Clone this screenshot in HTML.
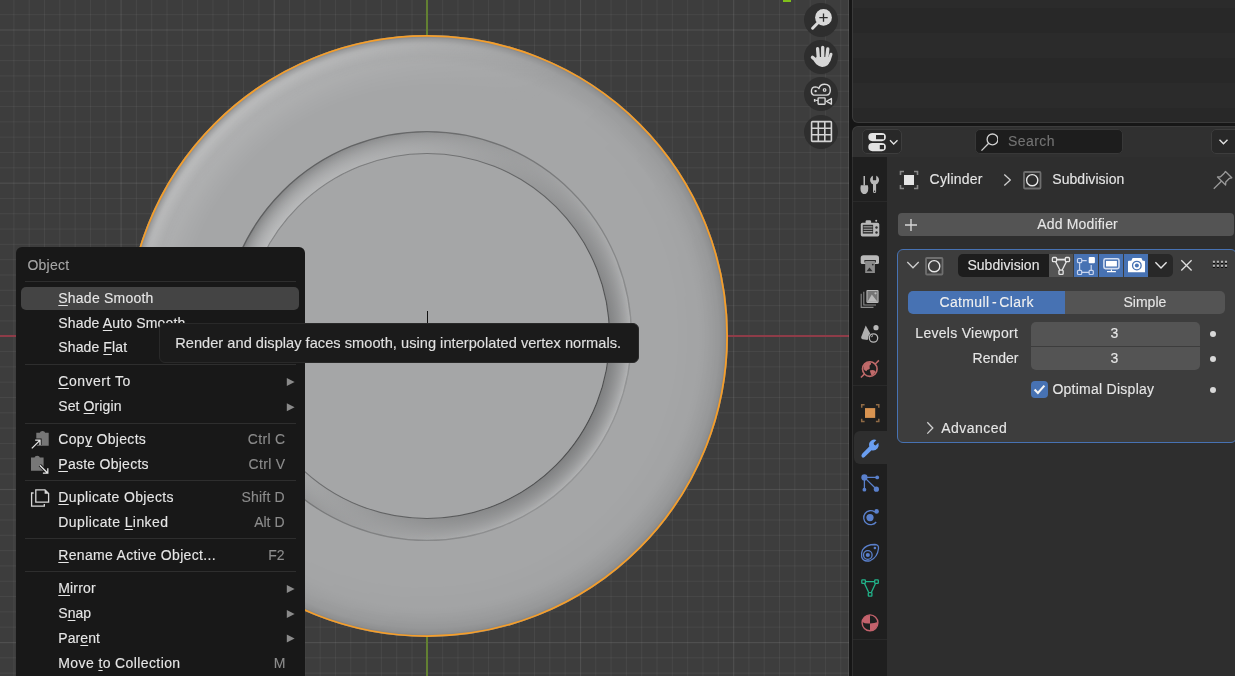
<!DOCTYPE html>
<html><head><meta charset="utf-8">
<style>
*{box-sizing:border-box;margin:0;padding:0}
html,body{width:1235px;height:676px;overflow:hidden;background:#161616;font-family:"Liberation Sans",sans-serif;}
.abs{position:absolute}
#vp{position:absolute;left:0;top:0;width:849px;height:676px;background-color:#3d3d3d;overflow:hidden;
 background-image:
  linear-gradient(to right, rgba(255,255,255,0.055) 1px, transparent 1px),
  linear-gradient(to bottom, rgba(255,255,255,0.055) 1px, transparent 1px),
  linear-gradient(to right, rgba(255,255,255,0.05) 1px, transparent 1px),
  linear-gradient(to bottom, rgba(255,255,255,0.05) 1px, transparent 1px);
 background-size:153.2px 153.2px,153.2px 153.2px,15.32px 15.32px,15.32px 15.32px;
 background-position:120.6px 0,0 29.5px,120.6px 0,0 29.5px;
}
#plate{position:absolute;left:126.5px;top:35px;width:601px;height:601px;border-radius:50%;
 background:#a4a5a6;box-shadow:0 0 0 1.5px #f0922a;overflow:hidden}
.gz{position:absolute;left:804px;width:34px;height:34px;border-radius:50%;background:#2e2e2e}
#outl{position:absolute;left:852px;top:0;width:383px;height:123px;background:#2b2b2b;border-bottom-left-radius:6px;overflow:hidden}
#props{position:absolute;left:852px;top:126px;width:383px;height:550px;background:#2e2e2e;border-top-left-radius:6px;overflow:hidden}
.t{position:absolute;white-space:nowrap;font-size:14px;line-height:14px;color:#e6e6e6}
#menu{position:absolute;left:16px;top:247px;width:289px;height:440px;background:#181818;border-radius:6px}
.mi{position:absolute;left:42.3px;font-size:14px;color:#e6e6e6;line-height:14px;white-space:nowrap}
u{text-decoration:underline;text-decoration-thickness:1px;text-underline-offset:1.5px}
.sc{position:absolute;right:20.5px;font-size:14px;color:#8c8c8c;line-height:14px;white-space:nowrap}
.sep{position:absolute;left:9px;width:271px;height:1px;background:#2e2e2e}
#tip{position:absolute;left:159.2px;top:323px;width:479.6px;height:39.5px;background:#1b1b1b;border:1px solid #292929;border-radius:6px}
#root{-webkit-text-stroke:0.12px currentColor;position:absolute;left:0;top:0;width:1235px;height:676px;overflow:hidden;will-change:transform;background:#161616}
</style></head><body><div id="root">
<div id="vp">
  <div class="abs" style="left:0;top:335px;width:849px;height:2px;background:#8e3c48"></div>
  <div class="abs" style="left:426px;top:0;width:2px;height:676px;background:#628032"></div>
  <svg class="abs" style="left:126px;top:34.5px" width="602" height="602" viewBox="0 0 602 602">
<defs>
 <radialGradient id="edgeD" cx="301" cy="301" r="301" gradientUnits="userSpaceOnUse">
  <stop offset="0.90" stop-color="#000" stop-opacity="0"/>
  <stop offset="0.97" stop-color="#000" stop-opacity="0.05"/>
  <stop offset="0.988" stop-color="#000" stop-opacity="0.12"/>
  <stop offset="1" stop-color="#000" stop-opacity="0.26"/>
 </radialGradient>
 <radialGradient id="hbm" cx="301" cy="301" r="301" gradientUnits="userSpaceOnUse">
  <stop offset="0.82" stop-color="#000"/>
  <stop offset="0.93" stop-color="#777"/>
  <stop offset="0.962" stop-color="#fff"/>
  <stop offset="0.975" stop-color="#fff"/>
  <stop offset="1" stop-color="#222"/>
 </radialGradient>
 <mask id="mH" maskUnits="userSpaceOnUse" x="0" y="0" width="602" height="602"><circle cx="301" cy="301" r="301" fill="url(#hbm)"/></mask>
 <linearGradient id="hl" x1="60" y1="90" x2="420" y2="420" gradientUnits="userSpaceOnUse">
  <stop offset="0" stop-color="#fff" stop-opacity="0.36"/>
  <stop offset="0.5" stop-color="#fff" stop-opacity="0.0"/>
  <stop offset="0.5" stop-color="#000" stop-opacity="0.0"/>
  <stop offset="1" stop-color="#000" stop-opacity="0.03"/>
 </linearGradient>
 <radialGradient id="rmo" cx="301" cy="301" r="205" gradientUnits="userSpaceOnUse">
  <stop offset="0" stop-color="#000"/>
  <stop offset="0.888" stop-color="#000"/>
  <stop offset="1" stop-color="#fff"/>
 </radialGradient>
 <radialGradient id="rmi" cx="301" cy="301" r="205" gradientUnits="userSpaceOnUse">
  <stop offset="0" stop-color="#000"/>
  <stop offset="0.888" stop-color="#000"/>
  <stop offset="0.889" stop-color="#fff"/>
  <stop offset="1" stop-color="#000"/>
 </radialGradient>
 <mask id="mRo" maskUnits="userSpaceOnUse" x="0" y="0" width="602" height="602"><circle cx="301" cy="301" r="205" fill="url(#rmo)"/></mask>
 <mask id="mRi" maskUnits="userSpaceOnUse" x="0" y="0" width="602" height="602"><circle cx="301" cy="301" r="205" fill="url(#rmi)"/></mask>
 <linearGradient id="vA" x1="115" y1="214" x2="487" y2="388" gradientUnits="userSpaceOnUse">
  <stop offset="0" stop-color="#808182"/>
  <stop offset="1" stop-color="#b8b9ba"/>
 </linearGradient>
 <linearGradient id="vB" x1="115" y1="214" x2="487" y2="388" gradientUnits="userSpaceOnUse">
  <stop offset="0" stop-color="#bebfc0"/>
  <stop offset="1" stop-color="#7a7b7c"/>
 </linearGradient>
 <linearGradient id="liI" x1="115" y1="214" x2="487" y2="388" gradientUnits="userSpaceOnUse">
  <stop offset="0" stop-color="#7a7b7c"/>
  <stop offset="0.5" stop-color="#5a5b5c"/>
  <stop offset="1" stop-color="#404142"/>
 </linearGradient>
 <linearGradient id="liO" x1="115" y1="150" x2="487" y2="452" gradientUnits="userSpaceOnUse">
  <stop offset="0" stop-color="#4a4b4c" stop-opacity="0.7"/>
  <stop offset="0.5" stop-color="#5a5b5c" stop-opacity="0.55"/>
  <stop offset="1" stop-color="#6a6b6c" stop-opacity="0.4"/>
 </linearGradient>
</defs>
<circle cx="301" cy="301" r="301" fill="#a5a6a7"/>
<circle cx="301" cy="301" r="301" fill="url(#hl)" mask="url(#mH)"/>
<circle cx="301" cy="301" r="301" fill="url(#edgeD)"/>
<circle cx="301" cy="301" r="205" fill="url(#vA)" mask="url(#mRo)"/>
<circle cx="301" cy="301" r="205" fill="url(#vB)" mask="url(#mRi)"/>
<circle cx="301" cy="301" r="204.4" fill="none" stroke="url(#liO)" stroke-width="1.3"/>
<circle cx="301" cy="301" r="182.5" fill="none" stroke="url(#liI)" stroke-opacity="0.8" stroke-width="1.1"/>
<circle cx="301" cy="301" r="300.1" fill="none" stroke="#f59e2a" stroke-width="1.8"/>
</svg>
  <div class="abs" style="left:427px;top:311px;width:1px;height:12px;background:#111"></div>
  <div class="abs" style="left:783px;top:0;width:8px;height:1.5px;background:#7fbf1a"></div>
  <div class="abs" style="left:848px;top:0;width:1px;height:676px;background:rgba(255,255,255,0.09)"></div>
  <div class="gz" style="top:3px"></div>
  <div class="gz" style="top:40px"></div>
  <div class="gz" style="top:77px"></div>
  <div class="gz" style="top:115px"></div>
  <svg class="abs" style="left:800px;top:0" width="40" height="150" viewBox="800 0 40 150">
    <circle cx="823.5" cy="17.4" r="8.4" fill="#d8d8d8"/>
    <path d="M819.3 17.6 H827.7 M823.5 13.4 V21.8" stroke="#2a2a2a" stroke-width="1.3"/>
    <path d="M812.6 28.2 L818 22.8" stroke="#d8d8d8" stroke-width="3" stroke-linecap="round"/>
    <g stroke="#d6d6d6" stroke-linecap="round" fill="none">
      <path d="M817.6 48.7 L818.4 59" stroke-width="3.3"/>
      <path d="M822.7 47.4 L822.7 58.6" stroke-width="3.3"/>
      <path d="M827.8 49 L826.7 59" stroke-width="3.3"/>
      <path d="M831 54.3 L829 60.5" stroke-width="3.0"/>
      <path d="M812.5 57.4 L816.8 60.8" stroke-width="3.4"/>
    </g>
    <path d="M816.2 57 H830.4 Q830.4 63 827.5 65.2 Q825 67 822 66.9 Q818.8 66.7 816.3 64.3 Q814.6 62.6 813.6 60.2 L816.2 59 Z" fill="#d6d6d6"/>
    <g fill="none" stroke="#d8d8d8" stroke-width="1.4" stroke-linejoin="round">
      <path d="M813.5 95 Q811.4 94.5 811.4 91.3 Q811.4 87 815.5 86.9 Q817.6 86.9 818.9 88.6 Q819.8 84.2 824.6 84.2 Q830.3 84.3 830.3 90 Q830.3 95 826.5 95.1 Z"/>
      <rect x="818.1" y="97.9" width="7" height="6.3" rx="0.6"/>
      <path d="M831.4 98.5 L826.6 101.3 L831.4 104.1 Z"/>
    </g>
    <rect x="813.9" y="99" width="1.6" height="2.8" fill="#d8d8d8"/>
    <path d="M815.5 100.4 H818" stroke="#d8d8d8" stroke-width="1.2"/>
    <circle cx="815.6" cy="91.1" r="1.2" fill="#d8d8d8"/>
    <circle cx="824.6" cy="90" r="1.9" fill="#d8d8d8"/>
    <path d="M824.6 88.8 V91.2" stroke="#2e2e2e" stroke-width="0.7"/>
    <g fill="none" stroke="#d4d4d4" stroke-width="1.6">
      <rect x="811.6" y="121.6" width="19.8" height="19.8" rx="1"/>
      <path d="M818.3 121.6 V141.4 M824.8 121.6 V141.4 M811.6 128.2 H831.4 M811.6 134.8 H831.4"/>
    </g>
  </svg>
</div>
<div id="outl">
  <div class="abs" style="left:0;top:8px;width:383px;height:25px;background:#282828"></div>
  <div class="abs" style="left:0;top:58px;width:383px;height:25px;background:#282828"></div>
  <div class="abs" style="left:0;top:108px;width:383px;height:15px;background:#282828"></div>
  <div class="abs" style="left:0;top:0;width:400px;height:123px;border-left:1px solid #3a3a3a;border-bottom:1px solid #3a3a3a;border-bottom-left-radius:6px"></div>
</div>
<div id="props">
  <!-- header -->
  <div class="abs" style="left:0;top:0;width:383px;height:31px;background:#303030;border-top:1px solid #3c3c3c;border-left:1px solid #3c3c3c;border-top-left-radius:6px"></div>
  <div class="abs" style="left:10px;top:3px;width:40px;height:25px;background:#282828;border:1px solid #3d3d3d;border-radius:5px"></div>
  <svg class="abs" style="left:14px;top:5px" width="36" height="22" viewBox="0 0 36 22">
    <rect x="2.3" y="2" width="17.6" height="8.2" rx="4.1" fill="#e2e2e2"/>
    <rect x="10" y="4" width="8" height="4.2" fill="#2a2a2a"/>
    <rect x="2.3" y="12" width="17.6" height="8.2" rx="4.1" fill="#e2e2e2"/>
    <rect x="13.8" y="14" width="4.2" height="4.2" fill="#2a2a2a"/>
    <path d="M24 9.2 L27.7 13 L31.5 9.2" fill="none" stroke="#e2e2e2" stroke-width="1.3"/>
  </svg>
  <div class="abs" style="left:123px;top:3px;width:148px;height:25px;background:#1d1d1d;border:1px solid #383838;border-radius:5px"></div>
  <svg class="abs" style="left:126px;top:5px" width="20" height="22" viewBox="0 0 20 22">
    <circle cx="14.5" cy="8.4" r="5.4" fill="none" stroke="#d0d0d0" stroke-width="1.3"/>
    <path d="M10.7 12.3 L3.5 19.6" stroke="#d0d0d0" stroke-width="1.3"/>
  </svg>
  <div class="t" style="left:156px;top:8.4px;color:#737373;letter-spacing:0.45px">Search</div>
  <div class="abs" style="left:359px;top:3px;width:40px;height:25px;background:#282828;border:1px solid #3d3d3d;border-radius:5px"></div>
  <svg class="abs" style="left:366px;top:12px" width="12" height="8" viewBox="0 0 12 8">
    <path d="M1.5 1.8 L5.5 5.8 L9.5 1.8" fill="none" stroke="#e2e2e2" stroke-width="1.4"/>
  </svg>
  <!-- tabs column -->
  <div class="abs" style="left:0;top:31px;width:35px;height:519px;background:#1f1f1f;border-left:1px solid #303030"></div>
  <div class="abs" style="left:1px;top:75px;width:34px;height:1px;background:#292929"></div>
  <div class="abs" style="left:1px;top:259px;width:34px;height:1px;background:#292929"></div>
  <div class="abs" style="left:1px;top:513px;width:34px;height:1px;background:#292929"></div>
  <div class="abs" style="left:2px;top:305px;width:34px;height:33px;background:#2e2e2e;border-radius:6px 0 0 6px"></div>
  <!-- content -->
  <svg class="abs" style="left:0;top:0" width="36" height="550" viewBox="0 0 36 550">
  <!-- tool -->
  <g fill="#b8b8b8">
    <rect x="11.5" y="50" width="1.5" height="9.5"/>
    <path d="M8.8 59.2 H15.9 Q16.7 62.5 16 65 Q14.9 68.1 12.35 68.1 Q9.8 68.1 8.7 65 Q8 62.5 8.8 59.2 Z"/>
    <circle cx="22.55" cy="54" r="4.5"/>
    <rect x="21" y="55" width="3.1" height="12" rx="1.5"/>
  </g>
  <rect x="20.9" y="49" width="3.3" height="5.3" rx="0.6" fill="#1f1f1f"/>
  <circle cx="22.55" cy="65.3" r="0.75" fill="#1f1f1f"/>
  <!-- render -->
  <g fill="#b8b8b8">
    <rect x="8.8" y="96.8" width="18.5" height="13.6" rx="1.6"/>
    <path d="M13.6 97 V95.6 Q13.6 94.3 14.9 94.3 H17.8 Q19.1 94.3 19.1 95.6 V97 Z"/>
    <circle cx="24.2" cy="94.8" r="1"/>
  </g>
  <rect x="10.8" y="98.8" width="10.3" height="8.8" fill="#2e2e2e"/>
  <g fill="#b8b8b8"><rect x="11.5" y="100.4" width="9" height="0.9"/><rect x="11.5" y="102.8" width="9" height="0.9"/><rect x="11.5" y="105.2" width="9" height="0.9"/></g>
  <circle cx="24.5" cy="101.5" r="1.2" fill="#2e2e2e"/><circle cx="24.5" cy="106.5" r="1.2" fill="#2e2e2e"/>
  <!-- output -->
  <path d="M8.7 136.5 V132 Q8.7 129.2 11.5 129.2 H24.2 Q27 129.2 27 132 V136.5 Q27 138 25.5 138 H10.2 Q8.7 138 8.7 136.5 Z" fill="#b8b8b8"/>
  <rect x="12.4" y="134" width="11.5" height="2.5" fill="#2e2e2e"/>
  <rect x="13.2" y="135" width="9.7" height="12" fill="#8c8c8c"/>
  <path d="M14.6 145.3 L17.5 141.5 L20.5 145.3 Z" fill="#2e2e2e"/>
  <circle cx="20.8" cy="138.6" r="0.9" fill="#2e2e2e"/>
  <!-- view layer -->
  <g fill="none" stroke="#8a8a8a" stroke-width="1.1"><path d="M9.2 167.8 V181.4 H21.5"/><path d="M11.8 165.8 V179 H24"/></g>
  <rect x="14.4" y="163.9" width="12.2" height="13" rx="1.2" fill="#b8b8b8"/>
  <rect x="15.6" y="165.1" width="9.8" height="10.6" fill="#8c8c8c" fill-opacity="0"/>
  <path d="M15.6 175.5 L19.2 169.6 L23.6 175.5 Z" fill="#2e2e2e" fill-opacity="0.0"/>
  <rect x="15.5" y="165" width="10" height="10.8" fill="#767676"/>
  <path d="M15.5 175.8 L19.8 168.5 L25.5 175.8 Z" fill="#b8b8b8"/>
  <circle cx="23.5" cy="167.3" r="1.1" fill="#b8b8b8"/>
  <!-- scene -->
  <path d="M13.7 199.4 L9.2 211 Q8.7 212.6 10.4 213.2 L15.5 214 L18.5 208 Z" fill="#b0b0b0"/>
  <circle cx="24" cy="201.7" r="2.6" fill="#b8b8b8"/>
  <circle cx="21.5" cy="212" r="5.3" fill="#1f1f1f"/>
  <circle cx="21.5" cy="212" r="4.2" fill="none" stroke="#b8b8b8" stroke-width="1.3"/>
  <path d="M19.4 211.2 Q19.8 209.8 21 209.6" fill="none" stroke="#b8b8b8" stroke-width="1"/>
  <!-- world -->
  <circle cx="17.8" cy="243.1" r="7.3" fill="none" stroke="#c06a6a" stroke-width="1.6"/>
  <path d="M11.6 240.5 Q13 236.6 17.2 236 Q19.8 236.6 18.8 238.6 Q17 239.5 17.6 241.2 Q18.6 242.6 16.6 243.4 Q14.8 243.2 14.6 245.2 Q12.6 245 11.6 243 Z M17.8 244.6 Q20.6 243.2 23.4 245 Q23 248.2 19.6 249.8 Q18.6 247.6 17.8 244.6 Z" fill="#c06a6a"/>
  <path d="M8.9 251.5 L12.6 247.9 M23 238.2 L26.9 234.4" stroke="#c06a6a" stroke-width="1.5"/>
  <!-- object -->
  <path d="M9.7 281.8 V278.8 H12.6 M23.9 278.8 H26.8 V281.8 M26.8 292.7 V295.6 H23.9 M12.6 295.6 H9.7 V292.7" fill="none" stroke="#8f6a45" stroke-width="1.5"/>
  <rect x="13" y="282.1" width="10.2" height="9.8" fill="#d99451"/>
  <!-- modifier wrench active -->
  <path d="M10.4 327.4 L17.3 320.6 Q16.2 316.4 19.4 314.4 Q22 313 24.4 314.1 L21.6 317 Q21.6 319.2 23.6 319.6 L26.4 316.8 Q27.3 319.8 25.6 322.2 Q23.2 325 19.6 324.2 L12.6 331 Q11 332.4 9.8 331.1 Q8.7 329.3 10.4 327.4 Z" fill="#6a9ef0"/>
  <!-- particles -->
  <g stroke="#5a80cc" stroke-width="1.3"><path d="M12.4 351.4 H25.2 M12.4 351.4 V363.7 M12.4 351.4 L24.4 363.2"/></g>
  <g fill="#5a80cc"><circle cx="12.4" cy="351.4" r="3.1"/><circle cx="25.2" cy="351.4" r="1.9"/><circle cx="12.4" cy="363.7" r="1.9"/><circle cx="24.4" cy="363.2" r="2.6"/></g>
  <!-- physics -->
  <path d="M22.8 386 A7 7 0 1 0 24.2 396" fill="none" stroke="#5a80cc" stroke-width="1.3"/>
  <circle cx="18" cy="391.6" r="3.6" fill="#5a80cc"/>
  <circle cx="24.6" cy="385.4" r="2.3" fill="#5a80cc"/>
  <!-- constraints -->
  <path d="M10.5 424 Q14 418.5 23 418.5 Q27 418.8 26.5 422.5 Q25.5 431.2 18.5 434.5 Q11.5 436.5 9.7 431 Q9 427 10.5 424 Z" fill="none" stroke="#5a80cc" stroke-width="1.3"/>
  <circle cx="15.8" cy="429" r="4.3" fill="none" stroke="#5a80cc" stroke-width="1.3"/>
  <circle cx="15.8" cy="429" r="2.1" fill="#5a80cc"/>
  <circle cx="22.9" cy="422" r="1.3" fill="#5a80cc"/>
  <!-- data -->
  <g fill="none" stroke="#22b38a" stroke-width="1.3">
    <path d="M13.5 455.6 H22.5 M12.5 457.5 L16.5 466 M23.5 457.5 L19.5 466"/>
    <rect x="9.8" y="453.8" width="3.6" height="3.6" rx="0.6"/>
    <rect x="22.7" y="453.8" width="3.6" height="3.6" rx="0.6"/>
    <rect x="16.3" y="466.6" width="3.6" height="3.6" rx="0.6"/>
  </g>
  <!-- material -->
  <circle cx="18" cy="496.8" r="7.9" fill="none" stroke="#c4626c" stroke-width="1.4"/>
  <path d="M18 489 V497.5 Q13 498 10.3 496 A7.9 7.9 0 0 1 18 489 Z" fill="#c4626c"/>
  <path d="M18 504.6 V497.5 Q22.5 497.3 25.8 496 A7.9 7.9 0 0 1 18 504.6 Z" fill="#c4626c"/>
</svg>
  <!-- breadcrumb -->
  <svg class="abs" style="left:47px;top:44px" width="20" height="20" viewBox="0 0 20 20">
    <path d="M1.5 5 V1.5 H5 M15 1.5 H18.5 V5 M18.5 15 V18.5 H15 M5 18.5 H1.5 V15" fill="none" stroke="#8a8a8a" stroke-width="1.6"/>
    <rect x="5" y="5" width="10" height="10" fill="#e6e6e6"/>
  </svg>
  <div class="t" style="left:77.6px;top:46.3px;letter-spacing:0.2px">Cylinder</div>
  <svg class="abs" style="left:150px;top:47px" width="12" height="14" viewBox="0 0 12 14">
    <path d="M2.3 1.5 L8.3 7 L2.3 12.5" fill="none" stroke="#cfcfcf" stroke-width="1.3"/>
  </svg>
  <svg class="abs" style="left:170px;top:44px" width="20" height="20" viewBox="0 0 20 20">
    <rect x="2" y="2" width="16.5" height="16.5" rx="1" fill="none" stroke="#6f6f6f" stroke-width="1.8"/>
    <circle cx="10.2" cy="10.2" r="5.6" fill="none" stroke="#e6e6e6" stroke-width="1.4"/>
  </svg>
  <div class="t" style="left:200.3px;top:46.3px;letter-spacing:0.05px">Subdivision</div>
  <svg class="abs" style="left:360px;top:44px" width="22" height="20" viewBox="0 0 22 20">
    <path d="M13.5 1.5 L19.8 7.8 L17.5 8.3 L13.8 12 L13.6 15 L5.5 7 L8.5 6.8 L12.2 3.2 Z" fill="none" stroke="#9a9a9a" stroke-width="1.3" stroke-linejoin="round"/>
    <path d="M9.6 11 L1.8 18.8" stroke="#9a9a9a" stroke-width="1.3"/>
  </svg>
  <!-- add modifier -->
  <div class="abs" style="left:46px;top:87px;width:336px;height:23.3px;background:#545454;border-radius:4px"></div>
  <svg class="abs" style="left:52px;top:92px" width="14" height="14" viewBox="0 0 14 14">
    <path d="M7 1 V13 M1 7 H13" stroke="#d6d6d6" stroke-width="1.4"/>
  </svg>
  <div class="t" style="left:185.2px;top:91.4px;letter-spacing:0.18px">Add Modifier</div>
  <!-- modifier panel -->
  <div class="abs" style="left:45px;top:123.3px;width:339.5px;height:193.5px;background:#3d3d3d;border:1px solid #4772b3;border-radius:6px"></div>
  <svg class="abs" style="left:54px;top:133px" width="14" height="12" viewBox="0 0 14 12">
    <path d="M1.3 3 L7 8.8 L12.7 3" fill="none" stroke="#cfcfcf" stroke-width="1.3"/>
  </svg>
  <svg class="abs" style="left:72px;top:130px" width="20" height="20" viewBox="0 0 20 20">
    <rect x="2" y="2" width="16.5" height="16.5" rx="1" fill="none" stroke="#6f6f6f" stroke-width="1.8"/>
    <circle cx="10.2" cy="10.2" r="5.6" fill="none" stroke="#e6e6e6" stroke-width="1.4"/>
  </svg>
  <div class="abs" style="left:106px;top:128px;width:91px;height:23px;background:#1d1d1d;border-radius:5px 0 0 5px"></div>
  <div class="t" style="left:115.4px;top:132px;letter-spacing:0.05px">Subdivision</div>
  <div class="abs" style="left:197.2px;top:128px;width:23.5px;height:23px;background:#545454"></div>
  <div class="abs" style="left:222px;top:128px;width:23.7px;height:23px;background:#4772b3"></div>
  <div class="abs" style="left:247px;top:128px;width:24px;height:23px;background:#4772b3"></div>
  <div class="abs" style="left:272.2px;top:128px;width:24px;height:23px;background:#4772b3"></div>
  <div class="abs" style="left:296.2px;top:128px;width:24.5px;height:23px;background:#282828;border-radius:0 5px 5px 0"></div>
  <svg class="abs" style="left:197px;top:128px" width="124" height="23" viewBox="0 0 124 23">
    <g transform="translate(-1049,-254)">
    <g fill="none" stroke="#e4e4e4">
      <path d="M1056.6 259.6 H1065.3" stroke-width="1.8"/>
      <path d="M1055.6 261.6 L1060 270.2 M1066.4 261.6 L1062.1 270.2" stroke-width="1.3"/>
      <g stroke-width="1.3"><rect x="1052.4" y="257.5" width="4.2" height="4.2" rx="0.9"/><rect x="1065.3" y="257.5" width="4.2" height="4.2" rx="0.9"/><rect x="1058.95" y="270.1" width="4.2" height="4.2" rx="0.9"/></g>
    </g>
    <g fill="none" stroke="#c9d5ee" stroke-width="1.2">
      <path d="M1081.7 260.6 H1086.7 M1079.6 262.7 V270.3 M1081.7 272.4 H1089.1 M1091.2 270.3 V265"/>
      <rect x="1077.5" y="258.5" width="4.2" height="4.2" rx="0.9"/><rect x="1077.5" y="270.3" width="4.2" height="4.2" rx="0.9"/><rect x="1089.1" y="270.3" width="4.2" height="4.2" rx="0.9"/>
    </g>
    <rect x="1088.7" y="257.1" width="6.2" height="6.2" rx="1" fill="#ffffff"/>
    <rect x="1103.9" y="258.8" width="15.1" height="9.8" rx="1.6" fill="none" stroke="#d2ddf1" stroke-width="1.6"/>
    <rect x="1106" y="260.9" width="10.9" height="5.6" fill="#ffffff"/>
    <path d="M1111.4 269.4 V271.5 M1107 271.6 H1115.9" stroke="#ffffff" stroke-width="1.1"/>
    <path d="M1128 261.8 Q1128 260.8 1129 260.8 H1131.3 L1132.6 258 H1141.4 L1142.7 260.8 H1144 Q1145 260.8 1145 261.8 V272.2 H1128 Z" fill="#ffffff"/>
    <circle cx="1136.85" cy="265.6" r="4.3" fill="none" stroke="#4772b3" stroke-width="1.3"/>
    <circle cx="1136.85" cy="265.6" r="2" fill="#4772b3"/>
    <path d="M1155.4 262.3 L1161 267.9 L1166.6 262.3" fill="none" stroke="#e6e6e6" stroke-width="1.4"/>
    </g>
  </svg>
  <svg class="abs" style="left:327px;top:132px" width="16" height="16" viewBox="0 0 16 16">
    <path d="M2.3 2.3 L12.6 12.5 M12.6 2.3 L2.3 12.5" stroke="#e0e0e0" stroke-width="1.3"/>
  </svg>
  <svg class="abs" style="left:360px;top:134px" width="18" height="10" viewBox="0 0 18 10"><rect x="0.85" y="1.75" width="2.1" height="2.1" fill="#000"/><rect x="0.85" y="0.75" width="2.1" height="2.1" fill="#b4b4b4"/><rect x="0.85" y="5.75" width="2.1" height="2.1" fill="#000"/><rect x="0.85" y="4.75" width="2.1" height="2.1" fill="#b4b4b4"/><rect x="4.85" y="1.75" width="2.1" height="2.1" fill="#000"/><rect x="4.85" y="0.75" width="2.1" height="2.1" fill="#b4b4b4"/><rect x="4.85" y="5.75" width="2.1" height="2.1" fill="#000"/><rect x="4.85" y="4.75" width="2.1" height="2.1" fill="#b4b4b4"/><rect x="8.95" y="1.75" width="2.1" height="2.1" fill="#000"/><rect x="8.95" y="0.75" width="2.1" height="2.1" fill="#b4b4b4"/><rect x="8.95" y="5.75" width="2.1" height="2.1" fill="#000"/><rect x="8.95" y="4.75" width="2.1" height="2.1" fill="#b4b4b4"/><rect x="12.95" y="1.75" width="2.1" height="2.1" fill="#000"/><rect x="12.95" y="0.75" width="2.1" height="2.1" fill="#b4b4b4"/><rect x="12.95" y="5.75" width="2.1" height="2.1" fill="#000"/><rect x="12.95" y="4.75" width="2.1" height="2.1" fill="#b4b4b4"/></svg>
  <!-- catmull / simple -->
  <div class="abs" style="left:56px;top:165px;width:157.2px;height:23.2px;background:#4772b3;border-radius:5px 0 0 5px"></div>
  <div class="abs" style="left:213.2px;top:165px;width:159.5px;height:23.2px;background:#545454;border-radius:0 5px 5px 0"></div>
  <div class="t" style="left:87.4px;top:169.4px;letter-spacing:0.38px;color:#f0f0f0">Catmull<span style="margin:0 2.2px 0 2.6px">-</span>Clark</div>
  <div class="t" style="left:271.5px;top:169.4px">Simple</div>
  <!-- levels -->
  <div class="t" style="right:216.9px;top:200px;letter-spacing:0.28px">Levels Viewport</div>
  <div class="t" style="right:216.5px;top:225.3px">Render</div>
  <div class="abs" style="left:179.2px;top:196px;width:168.7px;height:48.3px;background:#545454;border-radius:5px"></div>
  <div class="abs" style="left:179.2px;top:219.5px;width:168.7px;height:1px;background:#3d3d3d"></div>
  <div class="t" style="left:258.5px;top:200px">3</div>
  <div class="t" style="left:258.5px;top:225.2px">3</div>
  <div class="abs" style="left:357.8px;top:204.8px;width:6px;height:6px;border-radius:50%;background:#d8d8d8"></div>
  <div class="abs" style="left:357.8px;top:229.7px;width:6px;height:6px;border-radius:50%;background:#d8d8d8"></div>
  <div class="abs" style="left:357.8px;top:260.8px;width:6px;height:6px;border-radius:50%;background:#d8d8d8"></div>
  <!-- optimal display -->
  <div class="abs" style="left:179.2px;top:255px;width:17px;height:17px;background:#4772b3;border-radius:4px"></div>
  <svg class="abs" style="left:179.2px;top:255px" width="17" height="17" viewBox="0 0 17 17">
    <path d="M3.6 8.6 L6.9 12 L13.4 4.6" fill="none" stroke="#f4f4f4" stroke-width="2.1"/>
  </svg>
  <div class="t" style="left:200.4px;top:255.9px;letter-spacing:0.26px">Optimal Display</div>
  <!-- advanced -->
  <svg class="abs" style="left:73px;top:295px" width="12" height="14" viewBox="0 0 12 14">
    <path d="M2.3 1.3 L7.8 7 L2.3 12.6" fill="none" stroke="#cfcfcf" stroke-width="1.3"/>
  </svg>
  <div class="t" style="left:89.2px;top:295.2px;letter-spacing:0.46px">Advanced</div>
</div>
<div id="menu">
<div class="abs" style="left:11.5px;top:11.15px;font-size:14px;line-height:14px;letter-spacing:0.22px;color:#a6a6a6;white-space:nowrap">Object</div>
<div class="sep" style="top:34.2px"></div>
<div class="sep" style="top:116.8px"></div>
<div class="sep" style="top:175.5px"></div>
<div class="sep" style="top:233.2px"></div>
<div class="sep" style="top:291.1px"></div>
<div class="sep" style="top:323.8px"></div>
<div class="abs" style="left:5.2px;top:40.2px;width:277.5px;height:22.6px;background:#444444;border-radius:5px"></div>
<div class="mi" style="top:43.95px;letter-spacing:0.22px"><u>S</u>hade Smooth</div>
<div class="mi" style="top:68.95px;letter-spacing:0.15px">Shade <u>A</u>uto Smooth</div>
<div class="mi" style="top:93.45px;letter-spacing:0.11px">Shade <u>F</u>lat</div>
<div class="mi" style="top:126.95px;letter-spacing:0.50px"><u>C</u>onvert To</div>
<div class="mi" style="top:152.15px;letter-spacing:0.10px">Set <u>O</u>rigin</div>
<div class="mi" style="top:185.15px;letter-spacing:0.32px">Cop<u>y</u> Objects</div>
<div class="sc" style="top:185.15px;letter-spacing:0.3px;right:19.6px">Ctrl C</div>
<div class="mi" style="top:209.65px;letter-spacing:0.26px"><u>P</u>aste Objects</div>
<div class="sc" style="top:209.65px;letter-spacing:0.3px;right:19.6px">Ctrl V</div>
<div class="mi" style="top:243.05px;letter-spacing:0.34px"><u>D</u>uplicate Objects</div>
<div class="sc" style="top:243.05px;letter-spacing:0.2px;right:20.1px">Shift D</div>
<div class="mi" style="top:268.05px;letter-spacing:0.41px">Duplicate <u>L</u>inked</div>
<div class="sc" style="top:268.05px">Alt D</div>
<div class="mi" style="top:301.05px;letter-spacing:0.32px"><u>R</u>ename Active Object...</div>
<div class="sc" style="top:301.05px">F2</div>
<div class="mi" style="top:333.85px;letter-spacing:0.14px"><u>M</u>irror</div>
<div class="mi" style="top:358.95px;letter-spacing:0.00px">S<u>n</u>ap</div>
<div class="mi" style="top:383.55px;letter-spacing:0.08px">Par<u>e</u>nt</div>
<div class="mi" style="top:408.65px;letter-spacing:0.39px">Move <u>t</u>o Collection</div>
<div class="sc" style="top:408.65px;right:19.7px">M</div>
<svg class="abs" style="left:0;top:0" width="289" height="430" viewBox="0 0 289 430"><g fill="#8a8a8a"><path d="M270.8 131.0 L278.6 135.0 L270.8 139.0 Z"/><path d="M270.8 156.2 L278.6 160.2 L270.8 164.2 Z"/><path d="M270.8 337.9 L278.6 341.9 L270.8 345.9 Z"/><path d="M270.8 363.0 L278.6 367.0 L270.8 371.0 Z"/><path d="M270.8 387.6 L278.6 391.6 L270.8 395.6 Z"/></g>
<g transform="translate(-16,-247)">
  <path d="M36.3 432.8 H39.8 Q40.2 430.9 42.5 430.9 Q44.8 430.9 45.2 432.8 H48.7 V445.8 H36.3 Z" fill="#777"/>
  <path d="M31.8 448.4 L39.6 440.6 M35.2 440.2 H40 V445" fill="none" stroke="#181818" stroke-width="3.2"/><path d="M31.8 448.4 L39.6 440.6 M35.2 440.2 H40 V445" fill="none" stroke="#e6e6e6" stroke-width="1.3"/>
  <path d="M31 457.6 H34.5 Q34.9 455.7 37.2 455.7 Q39.5 455.7 39.9 457.6 H43.6 V470.8 H31 Z" fill="#777"/>
  <path d="M39.8 465.2 L47.8 473.2 M47.8 468.3 V473.2 H42.9" fill="none" stroke="#181818" stroke-width="3.2"/><path d="M39.8 465.2 L47.8 473.2 M47.8 468.3 V473.2 H42.9" fill="none" stroke="#e6e6e6" stroke-width="1.3"/>
  <g fill="none" stroke="#d8d8d8" stroke-width="1.3">
   <path d="M35.8 489.8 H45 L48.6 493.4 V502.2 H35.8 Z"/>
   <path d="M33.6 493 H31.6 V506.2 H44.3 V504"/>
  </g>
  <path d="M44.6 489.8 L48.6 493.8 H44.6 Z" fill="#d8d8d8"/>
</g></svg>
</div>
<div id="tip"><div class="abs" style="left:15px;top:11px;font-size:14.6px;letter-spacing:0.033px;color:#e0e0e0;white-space:nowrap">Render and display faces smooth, using interpolated vertex normals.</div></div>
</div></body></html>
